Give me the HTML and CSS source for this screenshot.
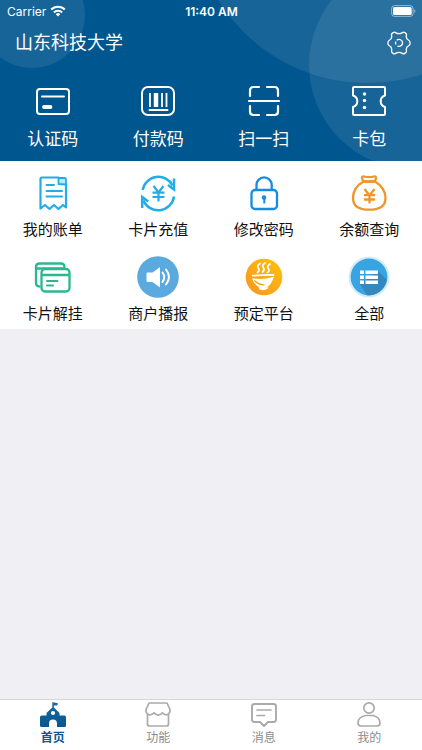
FILE: index.html
```html
<!DOCTYPE html>
<html lang="zh-CN">
<head>
<meta charset="utf-8">
<meta name="viewport" content="width=device-width, initial-scale=1">
<title>山东科技大学</title>
<link rel="stylesheet" href="styles.css">
</head>
<body>
<div class="app">
  <header class="hero">
    <svg class="hero-art" width="422" height="161" viewBox="0 0 422 161" aria-hidden="true">
      <g fill="#fff" fill-opacity=".085">
        <circle cx="32" cy="15" r="53"/>
        <circle cx="367" cy="-92" r="175"/>
        <circle cx="413" cy="65" r="104"/>
      </g>
    </svg>
    <div class="status">
      <div class="carrier">
        <span>Carrier</span>
        <svg width="16" height="12" viewBox="0 0 16 12" fill="none" stroke="#fff" stroke-width="2.1" aria-hidden="true">
          <path d="M1.2 4.6a9.6 9.6 0 0 1 13.6 0M3.9 7.4a5.8 5.8 0 0 1 8.2 0"/>
          <path d="M8 11.4 5.8 9.2a3.1 3.1 0 0 1 4.4 0z" fill="#fff" stroke="none"/>
        </svg>
      </div>
      <time class="clock">11:40 AM</time>
      <svg class="battery" width="25" height="12" viewBox="0 0 25 12" aria-hidden="true">
        <rect x=".6" y=".6" width="21.500" height="10.800" rx="3" fill="none" stroke="#fff" stroke-opacity=".5"/>
        <rect x="2" y="2" width="18.700" height="8" rx="1.600" fill="#fff"/>
        <path d="M23.300 4.200c1.400.5 1.400 3.100 0 3.600z" fill="#fff" fill-opacity=".6"/>
      </svg>
    </div>
    <div class="title-row">
      <h1>山东科技大学</h1>
      <button class="settings" type="button" aria-label="设置">
        <svg width="24" height="24" viewBox="0 0 24 24" fill="none" stroke="#fff" stroke-width="1.3" stroke-linejoin="round" stroke-linecap="round">
          <path d="M6.300 1.600c.8-.6 1.600-.5 2.300 0 2.300 1.500 4.500 1.500 6.800 0 .7-.5 1.500-.6 2.300 0l1.100.8c.7.5.8 1.200.6 2-.5 2.300.5 4.100 2.500 5.100 1 .5 1.200 1.600 1.200 2.500s-.2 2-1.200 2.500c-2 1-3 2.800-2.500 5.100.2.8.1 1.500-.6 2l-1.100.8c-.8.6-1.600.5-2.300 0-2.300-1.500-4.500-1.500-6.800 0-.7.5-1.500.6-2.300 0l-1.100-.8c-.7-.5-.8-1.200-.6-2 .5-2.300-.5-4.100-2.500-5.100-1-.5-1.200-1.600-1.200-2.500s.2-2 1.200-2.500c2-1 3-2.800 2.500-5.100-.2-.8-.1-1.500.6-2z"/>
          <path d="M10.200 8.900a3.500 3.500 0 1 1 .7 6.300M8.700 13a3.600 3.600 0 0 1 0-2"/>
        </svg>
      </button>
    </div>
    <nav class="grid quick" aria-label="快捷功能">
      <a class="tile" href="#">
        <svg width="34" height="34" viewBox="0 0 34 34" fill="none" stroke="#fff" stroke-width="2" stroke-linecap="round">
          <rect x="1" y="5" width="32" height="25" rx="3"/><path d="M6 12.500h22"/><path d="M8 23h6.500" stroke-width="3.800"/>
        </svg><span>认证码</span></a>
      <a class="tile" href="#">
        <svg width="34" height="34" viewBox="0 0 34 34" fill="none" stroke="#fff" stroke-width="2">
          <rect x="1" y="3" width="32" height="28" rx="6"/><path d="M9 9v14M21 9v14M25.500 9v14" stroke-width="1.800"/><path d="M15 9v14" stroke-width="4.500"/><path d="M8.500 26h18" stroke-linecap="round"/>
        </svg><span>付款码</span></a>
      <a class="tile" href="#">
        <svg width="34" height="34" viewBox="0 0 34 34" fill="none" stroke="#fff" stroke-width="2.200" stroke-linecap="round">
          <path d="M3 12V6.500Q3 3 6.500 3H12M20 3h7.500Q31 3 31 6.500V12M31 22v5.500q0 3.500-3.500 3.500H20M12 31H6.500Q3 31 3 27.500V22M2 17h30"/>
        </svg><span>扫一扫</span></a>
      <a class="tile" href="#">
        <svg width="34" height="34" viewBox="0 0 34 34" fill="none" stroke="#fff" stroke-width="2" stroke-linejoin="round">
          <path d="M2 3h30q1 0 1 1v7.500a6 6 0 0 0 0 11.500V30q0 1-1 1H2q-1 0-1-1v-7a6 6 0 0 0 0-11.500V4q0-1 1-1z"/>
          <g fill="#fff" stroke="none"><circle cx="12.500" cy="10" r="1.700"/><circle cx="12.500" cy="16.500" r="1.700"/><circle cx="12.500" cy="23.500" r="1.700"/></g>
        </svg><span>卡包</span></a>
    </nav>
  </header>

  <nav class="grid services" aria-label="服务">
    <a class="tile" href="#">
      <svg width="44" height="44" viewBox="0 0 44 44" fill="none" stroke="#22ade6" stroke-width="2.200" stroke-linejoin="round" stroke-linecap="round">
        <path d="M11 6.500h16.500l7.500 7V36.500L32 34l-4.500 4-4.500-4-4.500 4-4.500-4-4.500 3.500V8q0-1.500 1.500-1.500z"/>
        <path d="M27.500 7h6q1.500 0 1.500 1.500v5l-7.500-.5z" fill="#bce8fa" stroke-width="1.800"/><path d="M15.500 14h7.500M15.500 20H31M15.500 25.500H31" stroke-width="2"/>
      </svg><span>我的账单</span></a>
    <a class="tile" href="#">
      <svg width="44" height="44" viewBox="0 0 44 44" fill="none" stroke="#22ade6" stroke-width="2.500">
        <path d="M6.700 19a16 16 0 0 1 30-4.500M38 25.500a16 16 0 0 1-30.600 4"/>
        <path d="M38 7.500v11l-6-4.500M6.200 37V26l6 4.500"/>
        <path d="m17.500 15 5 6.500 5-6.500M16.500 21.700h12M16.500 26h12M22.500 21v9.500" stroke-width="2.200"/>
      </svg><span>卡片充值</span></a>
    <a class="tile" href="#">
      <svg width="44" height="44" viewBox="0 0 44 44" fill="none" stroke="#168ce0" stroke-width="2.300">
        <rect x="9.500" y="19" width="25.500" height="19" rx="3.500"/><path d="M14.500 18.500V14a7.600 7.600 0 0 1 15.200 0v4.500"/><circle cx="22" cy="26.500" r="2.300" fill="#168ce0" stroke="none"/><path d="M22.300 27v5.500" stroke-width="2"/>
      </svg><span>修改密码</span></a>
    <a class="tile" href="#">
      <svg width="44" height="44" viewBox="0 0 44 44" fill="none" stroke="#ef962b" stroke-width="2.300" stroke-linejoin="round">
        <path d="M16.500 10.500C9.500 14.500 6 20.500 6 27c0 8.500 5.500 11.700 16.200 11.700S38.500 35.500 38.500 27c0-6.500-4-12.500-10.500-16.500z"/>
        <path d="M17 5.500q5 1.200 10 0 2.500-.3 2 1.800-.6 3.200-2.500 3.200h-9q-1.900 0-2.500-3.200-.4-2.100 2-1.800z"/>
        <path d="m17.500 18 5 6.500 5-6.500M17 24.200h11M17 28.500h11M22.500 24v8.500"/>
      </svg><span>余额查询</span></a>
    <a class="tile" href="#">
      <svg width="44" height="44" viewBox="0 0 44 44" fill="none" stroke="#2db791" stroke-width="2.300" stroke-linecap="round" stroke-linejoin="round">
        <path d="M8.500 31.500Q5 31.500 5 28V12q0-3.500 3.500-3.500H30q3.500 0 3.500 3.500M6 13.500h27"/>
        <rect x="10.500" y="14" width="28" height="22.500" rx="3.500" fill="#fff"/><path d="M11 20h27"/><path d="M16 26h10.500M16 30.500h6" stroke-width="2"/>
      </svg><span>卡片解挂</span></a>
    <a class="tile" href="#">
      <svg width="44" height="44" viewBox="0 0 44 44" fill="none">
        <circle cx="22" cy="22" r="20.800" fill="#5aa9df"/>
        <path d="M11.500 17.500h5L24 12v20.500L16.500 27h-5q-1 0-1-1v-7.500q0-1 1-1z" fill="#fff"/>
        <path d="M26.500 17.500q3.500 4.500 0 9.500M30 14.500q6 7.500 0 15" stroke="#fff" stroke-width="2" stroke-linecap="round"/>
      </svg><span>商户播报</span></a>
    <a class="tile" href="#">
      <svg width="44" height="44" viewBox="0 0 44 44" fill="none">
        <defs><linearGradient id="bowl" x1="0" y1="1" x2="1" y2="0"><stop stop-color="#f7951e"/><stop offset="1" stop-color="#ffc20c"/></linearGradient></defs>
        <circle cx="22" cy="22" r="18.300" fill="url(#bowl)"/>
        <path d="M10 23.300q11 1.700 22-1.600-2.800 8.300-7.500 10.800-5 1.500-8.500-1Q11.500 28.500 10 23.300z" fill="#fff"/>
        <path d="M10.700 20.700q11-1 20.800-.7" stroke="#fff" stroke-width="1.800" stroke-linecap="round"/>
        <path d="M16 30.500q4.500 4 9.500 1.500l1 1q-4.500 3.500-9 1.500z" fill="#fff"/>
        <path d="M12.500 25.500q4 4.500 10 4.300" stroke="#f9a51b" stroke-width="1.300"/>
        <path d="M18 8.500q-3.500 2.200-1.700 4.500t-.8 4.500M23 8q-3.500 2.200-1.700 4.500T20.500 17M28 9q-3.500 2.200-1.700 4.500t-.8 4" stroke="#fff" stroke-width="1.700" stroke-linecap="round"/>
      </svg><span>预定平台</span></a>
    <a class="tile" href="#">
      <svg width="44" height="44" viewBox="0 0 44 44">
        <circle cx="22" cy="22" r="20.500" fill="#d2ecfc"/><circle cx="22" cy="22" r="18.400" fill="#38a5e2"/>
        <path d="m31 16 8.600 8.600A18.400 18.400 0 0 1 20 40.300L13 29z" fill="#3588b9"/>
        <path d="M13 15.500h4v3.500h-4zM18.500 15.500H31v3.500H18.500zM13 20.500h4V24h-4zM18.500 20.500H31V24H18.500zM13 25.500h4V29h-4zM18.500 25.500H31V29H18.500z" fill="#fff"/>
      </svg><span>全部</span></a>
  </nav>

  <main class="content"></main>

  <nav class="grid tabs" aria-label="主导航">
    <a class="tile active" href="#" aria-current="page">
      <svg width="28" height="28" viewBox="0 0 28 28">
        <defs><linearGradient id="school" x2="0" y2="1"><stop stop-color="#176ba4"/><stop offset="1" stop-color="#07558e"/></linearGradient></defs>
        <path d="M14 2.300 19 3.200 18 5.500H14.900V7.500L20.500 13v2.500h4.700q1.800 0 1.800 1.800v8.200q0 1.500-1.500 1.500H18v-3.500a4 4 0 0 0-8 0V27H2.500Q1 27 1 25.500v-8.200q0-1.800 1.800-1.800h4.700V13L13.300 7.500V2.300z" fill="url(#school)"/>
        <circle cx="14" cy="13" r="2.100" fill="#fff"/>
      </svg><span>首页</span></a>
    <a class="tile" href="#">
      <svg width="28" height="28" viewBox="0 0 28 28" fill="none" stroke="#aaa" stroke-width="1.700" stroke-linejoin="round">
        <path d="M5 3h18l3 6.500v2.300q-1.200 3-3.600 3t-4.100-2q-1.500 2.300-4.100 2.300t-4.100-2.300q-1.700 2-4.100 2T2 11.800V9.500z"/><path d="M3.500 14.500V24q0 2 2 2h17q2 0 2-2v-9.500"/>
      </svg><span>功能</span></a>
    <a class="tile" href="#">
      <svg width="28" height="28" viewBox="0 0 28 28" fill="none" stroke="#aaa" stroke-width="1.900" stroke-linejoin="round" stroke-linecap="round">
        <path d="M4.500 4h19q2.500 0 2.500 2.500v13q0 2.500-2.500 2.500H18l-4 4-4-4H4.500Q2 22 2 19.500v-13Q2 4 4.500 4z"/><path d="M7 10h14M7 15.500h7.500" stroke-width="1.700"/>
      </svg><span>消息</span></a>
    <a class="tile" href="#">
      <svg width="28" height="28" viewBox="0 0 28 28" fill="none" stroke="#aaa" stroke-width="1.700">
        <circle cx="14" cy="8" r="5.200"/><path d="M10.500 15.500h7.500q7 1.500 7 7.500 0 3-3 3H6q-3 0-3-3 0-6 7.500-7.500z" stroke-linejoin="round"/>
      </svg><span>我的</span></a>
  </nav>
</div>
</body>
</html>
```
FILE: styles.css
```css
* { box-sizing: border-box; }

body {
  margin: 0;
  background: #efeff4;
  color: #111;
  font-family: Inter, "Noto Sans CJK SC", sans-serif;
}

.app {
  display: flex;
  flex-direction: column;
  min-height: 100vh;
}

.hero {
  position: relative;
  overflow: hidden;
  background: #00568f;
  color: #fff;
}

.hero-art {
  position: absolute;
  top: 0;
  right: 0;
  width: 100%;
}

.status,
.title-row,
.quick { position: relative; }

.status {
  display: grid;
  grid-template-columns: 1fr auto 1fr;
  align-items: center;
  height: 22px;
  padding: 0 6px 0 7px;
  font-size: 12px;
}

.carrier {
  display: flex;
  align-items: center;
  gap: 4px;
}

.clock { font-weight: 600; }
.battery { justify-self: end; }

.title-row {
  display: flex;
  align-items: center;
  justify-content: space-between;
  height: 42px;
  padding: 0 11px 0 15px;
}

h1 {
  margin: 0;
  font-size: 18px;
  font-weight: 400;
  line-height: 24px;
}

.settings {
  display: flex;
  padding: 0;
  border: 0;
  background: none;
}

.grid {
  display: grid;
  grid-template-columns: repeat(4, 1fr);
}

.tile {
  display: flex;
  flex-direction: column;
  align-items: center;
  color: inherit;
  text-decoration: none;
}

.quick { padding: 20px 0 10px; }

.quick .tile {
  gap: 9px;
  font-size: 17px;
  line-height: 24px;
}

.services { background: #fff; }

.services .tile {
  gap: 5px;
  padding: 10px 0 5px;
  font-size: 15px;
  line-height: 20px;
}

.content { flex: 1; }

.tabs {
  border-top: 1px solid #d5d5da;
  background: #fff;
  color: #8c8c8c;
}

.tabs .tile {
  gap: 2px;
  padding-bottom: 4px;
  font-size: 12px;
  line-height: 16px;
}

.tabs .active {
  color: #0b5791;
  font-weight: 700;
}
```
